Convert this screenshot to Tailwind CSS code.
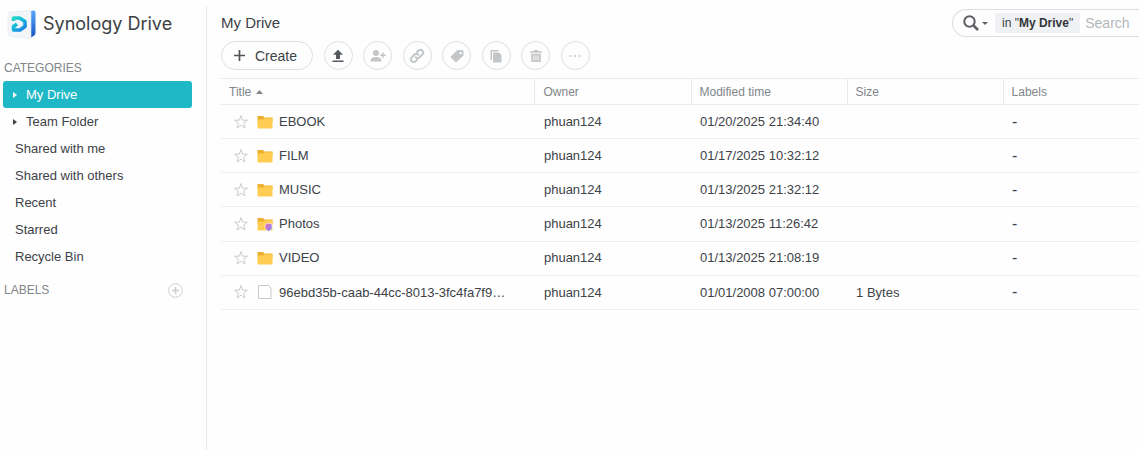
<!DOCTYPE html>
<html lang="en">
<head>
<meta charset="utf-8">
<meta name="viewport" content="width=device-width, initial-scale=1">
<title>Synology Drive</title>
<script src="https://cdn.jsdelivr.net/npm/@tailwindcss/browser@4"></script>
</head>
<body class="bg-[#fefefe] font-['Liberation_Sans',Arial,sans-serif] text-[13px] text-[#3c4248]">
<svg class="absolute size-0" aria-hidden="true">
  <defs>
    <linearGradient id="badge" x1="0" y1="0" x2="1" y2="1"><stop offset="0" stop-color="#f47c8c"/><stop offset="0.5" stop-color="#b878dc"/><stop offset="1" stop-color="#7884e8"/></linearGradient>
    <symbol id="star" viewBox="0 0 16 16"><path d="M8 1.600l1.600 4.600h4.900l-3.900 3 1.400 4.800L8 11.200 4 14l1.400-4.800-3.900-3h4.900z" fill="none" stroke="#c9cccf" stroke-linejoin="round"/></symbol>
    <symbol id="folder" viewBox="0 0 16 16"><path d="M.5 2h5.500l1.500 1.500h8V8H.5z" fill="#eeb02f"/><path d="M.5 5.500h6L8 4.300h7.500V14.500H.5z" fill="#ffcd52"/></symbol>
  </defs>
</svg>
<div class="flex min-h-screen pt-1.5">
  <aside class="w-[207px] shrink-0 border-r border-[#e8eaec]">
    <div class="flex h-9 items-center gap-1.5 pl-[7px]">
      <svg class="h-[32px] w-[30px] shrink-0" viewBox="0 0 30 32" aria-hidden="true">
        <defs>
          <linearGradient id="side" x1="0" y1="0" x2="0" y2="1"><stop offset="0" stop-color="#58a7fa"/><stop offset="1" stop-color="#1552c4"/></linearGradient>
          <linearGradient id="dee" gradientUnits="userSpaceOnUse" x1="5" y1="8" x2="18" y2="24"><stop offset="0" stop-color="#2be0c0"/><stop offset="0.5" stop-color="#16b7dc"/><stop offset="1" stop-color="#1670e8"/></linearGradient>
        </defs>
        <path d="M23 3.500L26 2.500Q28.500 2 28.500 4.500V25Q28.500 27 26.500 28L23 30z" fill="url(#side)"/>
        <path d="M2.500 4L22 2.500Q24 2.400 24 4.500V28.500Q24 31 22 30.500L2.500 28Q1 27.800 1 26V5.500Q1 4.200 2.500 4z" fill="#f3f5f9" stroke="#e3e7ee" stroke-width=".6"/>
        <path d="M6.500 13V10H12.500L18 13.500V18.500L13 22H6.500V18.500L10 16" fill="none" stroke="url(#dee)" stroke-width="3.600" stroke-linejoin="round"/>
      </svg>
      <h1 class="font-[Inter,sans-serif] text-lg leading-8 whitespace-nowrap text-[#3c4043]">Synology Drive</h1>
    </div>
    <h2 class="mt-4 pl-1 text-xs leading-5 text-[#81868b]">CATEGORIES</h2>
    <nav class="mt-[3px] flex flex-col pr-3.5 pl-[3px] leading-[27px]" aria-label="Categories">
      <a href="#" aria-current="page" class="flex items-center gap-2 rounded-[3px] bg-[#1fb8c6] pl-2.5 text-white"><svg class="h-1.5 w-[5px]" viewBox="0 0 5 6" aria-hidden="true"><path d="M0 0l4 3-4 3z" fill="currentColor"/></svg>My Drive</a>
      <a href="#" class="flex items-center gap-2 pl-2.5"><svg class="h-1.5 w-[5px]" viewBox="0 0 5 6" aria-hidden="true"><path d="M0 0l4 3-4 3z" fill="currentColor"/></svg>Team Folder</a>
      <a href="#" class="pl-3">Shared with me</a>
      <a href="#" class="pl-3">Shared with others</a>
      <a href="#" class="pl-3">Recent</a>
      <a href="#" class="pl-3">Starred</a>
      <a href="#" class="pl-3">Recycle Bin</a>
    </nav>
    <div class="mt-2.5 flex items-center justify-between pr-[23px] pl-1">
      <h2 class="text-xs leading-5 text-[#81868b]">LABELS</h2>
      <button type="button" aria-label="Add label"><svg class="size-[15px]" viewBox="0 0 15 15" fill="none" stroke="#cbced1" aria-hidden="true"><circle cx="7.500" cy="7.500" r="6.800"/><path d="M7.500 4v7M4 7.500h7" stroke-width="1.600"/></svg></button>
    </div>
  </aside>

  <main class="min-w-0 flex-1 pl-3.5">
    <header class="flex items-start justify-between">
      <h2 class="pt-[7px] text-[15px] leading-5">My Drive</h2>
      <div class="mt-[3px] flex h-7 w-[187px] items-center rounded-l-full border border-r-0 border-[#dcdfe2] pl-2.5">
        <button type="button" aria-label="Search options" class="flex items-center gap-[3px]">
          <svg class="size-4" viewBox="0 0 16 16" fill="none" stroke="#5c6064" aria-hidden="true"><circle cx="6.500" cy="6.500" r="5.200" stroke-width="2"/><path d="M10.500 10.500l4.500 4.500" stroke-width="2.500"/></svg>
          <svg class="h-[3px] w-1.5" viewBox="0 0 6 3" aria-hidden="true"><path d="M0 0h6L3 3z" fill="#5c6064"/></svg>
        </button>
        <span class="ml-[7px] rounded-xs bg-[#eff1f4] px-[7px] text-xs leading-5 whitespace-nowrap">in "<b class="text-[#32363a]">My Drive</b>"</span>
        <input type="text" aria-label="Search" placeholder="Search" class="ml-[5px] min-w-0 flex-1 text-sm outline-none placeholder:text-[#b4b8bb]">
      </div>
    </header>

    <div class="mt-1 flex max-w-[369px] items-center justify-between text-[#c3c6c8]" role="toolbar" aria-label="File actions">
      <button type="button" class="flex h-[29px] w-[92px] items-center gap-2.5 rounded-full border border-[#dcdfe2] pl-3 text-sm text-[#3c4248]"><svg class="size-[11px]" viewBox="0 0 11 11" aria-hidden="true"><path d="M5.500 0v11M0 5.500h11" stroke="#505458" stroke-width="1.700"/></svg>Create</button>
      <button type="button" aria-label="Upload" class="flex size-[29px] items-center justify-center rounded-full border border-[#dcdfe2] text-[#55595d]"><svg class="size-3.5" viewBox="0 0 14 14" fill="currentColor" aria-hidden="true"><path d="M7 .7l5 5H9V10H5V5.700H2zM1.500 11.500h11V13h-11z"/></svg></button>
      <button type="button" disabled aria-label="Share" class="flex size-[29px] items-center justify-center rounded-full border border-[#dcdfe2]"><svg class="h-3.5 w-4" viewBox="0 0 16 14" fill="currentColor" aria-hidden="true"><circle cx="6" cy="4" r="3"/><path d="M.5 12.500V11Q1.500 8 6 8t5.500 3v1.500zM12.300 3.500h1.400v2h2v1.400h-2v2h-1.400v-2h-2V5.500h2z"/></svg></button>
      <button type="button" disabled aria-label="Copy link" class="flex size-[29px] items-center justify-center rounded-full border border-[#dcdfe2]"><svg class="size-4" viewBox="0 0 16 16" fill="none" stroke="currentColor" stroke-width="2" stroke-linecap="round" aria-hidden="true"><path d="M6.700 9.300a2.700 2.700 0 0 0 3.900 0l2.700-2.700a2.700 2.700 0 0 0-3.900-3.900L8 4.100M9.300 6.700a2.700 2.700 0 0 0-3.900 0L2.700 9.400a2.700 2.700 0 0 0 3.900 3.900L8 11.900"/></svg></button>
      <button type="button" disabled aria-label="Label" class="flex size-[29px] items-center justify-center rounded-full border border-[#dcdfe2]"><svg class="size-3.5" viewBox="0 0 14 14" fill="currentColor" fill-rule="evenodd" aria-hidden="true"><path d="M7.500 1h4.500Q13.500 1 13.500 2.500v4L6.800 12.800Q6 13.500 5.200 12.800L1 8.800Q.3 8 1 7.300zM10.500 2.800a1.200 1.200 0 1 0 .01 2.400A1.200 1.200 0 0 0 10.500 2.800z"/></svg></button>
      <button type="button" disabled aria-label="Copy" class="flex size-[29px] items-center justify-center rounded-full border border-[#dcdfe2]"><svg class="size-3.5" viewBox="0 0 14 14" fill="currentColor" aria-hidden="true"><path d="M1.500 1h8v1.500H3V11H1.500zM4 3.500h6L12.500 6v7.500H4z"/></svg></button>
      <button type="button" disabled aria-label="Delete" class="flex size-[29px] items-center justify-center rounded-full border border-[#dcdfe2]"><svg class="size-3.5" viewBox="0 0 14 14" fill="currentColor" fill-rule="evenodd" aria-hidden="true"><path d="M5 1h4v1.200h4v1.500H1V2.200h4zM2.200 4.700h9.600V13H2.200zM4.300 6.200v5.300h.9V6.200zM6.500 6.200v5.300h.9V6.200zM8.700 6.200v5.300h.9V6.200z"/></svg></button>
      <button type="button" disabled aria-label="More" class="flex size-[29px] items-center justify-center rounded-full border border-[#dcdfe2]"><svg class="h-1 w-3" viewBox="0 0 12 4" fill="currentColor" aria-hidden="true"><circle cx="1.500" cy="2" r="1"/><circle cx="6" cy="2" r="1"/><circle cx="10.500" cy="2" r="1"/></svg></button>
    </div>

    <table class="mt-2 h-[232px] w-full table-fixed border-collapse text-left whitespace-nowrap">
      <colgroup><col class="w-[34.2%]"><col class="w-[17%]"><col class="w-[17%]"><col class="w-[17%]"><col></colgroup>
      <thead class="text-xs text-[#81868b]">
        <tr class="h-[26px] border-y border-[#e8eaec]">
          <th scope="col" class="pl-2 font-normal" aria-sort="ascending"><button type="button" class="flex items-center gap-[5px]">Title<svg class="h-1 w-[7px]" viewBox="0 0 7 4" aria-hidden="true"><path d="M0 4l3.500-4L7 4z" fill="#81868b"/></svg></button></th>
          <th scope="col" class="border-l border-[#e8eaec] pl-2 font-normal">Owner</th>
          <th scope="col" class="border-l border-[#e8eaec] pl-2 font-normal">Modified time</th>
          <th scope="col" class="border-l border-[#e8eaec] pl-2 font-normal">Size</th>
          <th scope="col" class="border-l border-[#e8eaec] pl-2 font-normal">Labels</th>
        </tr>
      </thead>
      <tbody>
        <tr class="border-b border-[#edeff0]">
          <td class="pl-3"><div class="flex items-center"><button type="button" aria-label="Star EBOOK"><svg class="size-4"><use href="#star"/></svg></button><svg class="mr-1.5 ml-2 size-4"><use href="#folder"/></svg>EBOOK</div></td>
          <td class="pl-[9px]">phuan124</td><td class="pl-[9px]">01/20/2025 21:34:40</td><td class="pl-[9px]"></td><td class="pl-[9px] text-base">-</td>
        </tr>
        <tr class="border-b border-[#edeff0]">
          <td class="pl-3"><div class="flex items-center"><button type="button" aria-label="Star FILM"><svg class="size-4"><use href="#star"/></svg></button><svg class="mr-1.5 ml-2 size-4"><use href="#folder"/></svg>FILM</div></td>
          <td class="pl-[9px]">phuan124</td><td class="pl-[9px]">01/17/2025 10:32:12</td><td class="pl-[9px]"></td><td class="pl-[9px] text-base">-</td>
        </tr>
        <tr class="border-b border-[#edeff0]">
          <td class="pl-3"><div class="flex items-center"><button type="button" aria-label="Star MUSIC"><svg class="size-4"><use href="#star"/></svg></button><svg class="mr-1.5 ml-2 size-4"><use href="#folder"/></svg>MUSIC</div></td>
          <td class="pl-[9px]">phuan124</td><td class="pl-[9px]">01/13/2025 21:32:12</td><td class="pl-[9px]"></td><td class="pl-[9px] text-base">-</td>
        </tr>
        <tr class="border-b border-[#edeff0]">
          <td class="pl-3"><div class="flex items-center"><button type="button" aria-label="Star Photos"><svg class="size-4"><use href="#star"/></svg></button><svg class="mr-1.5 ml-2 size-4" viewBox="0 0 16 16"><use href="#folder"/><path d="M8 8.500l3-1.500 4 1v5l-3.500 2.500L8 12.500z" fill="url(#badge)" stroke="#fff" stroke-width=".6"/></svg>Photos</div></td>
          <td class="pl-[9px]">phuan124</td><td class="pl-[9px]">01/13/2025 11:26:42</td><td class="pl-[9px]"></td><td class="pl-[9px] text-base">-</td>
        </tr>
        <tr class="border-b border-[#edeff0]">
          <td class="pl-3"><div class="flex items-center"><button type="button" aria-label="Star VIDEO"><svg class="size-4"><use href="#star"/></svg></button><svg class="mr-1.5 ml-2 size-4"><use href="#folder"/></svg>VIDEO</div></td>
          <td class="pl-[9px]">phuan124</td><td class="pl-[9px]">01/13/2025 21:08:19</td><td class="pl-[9px]"></td><td class="pl-[9px] text-base">-</td>
        </tr>
        <tr class="border-b border-[#edeff0]">
          <td class="pl-3"><div class="flex items-center"><button type="button" aria-label="Star file"><svg class="size-4"><use href="#star"/></svg></button><svg class="mr-1.5 ml-2 size-4" viewBox="0 0 16 16" aria-hidden="true"><path d="M2 1.500h9.500l2.500 2.500v10.500H2q-.5 0-.5-.5V2q0-.5.500-.5z" fill="#fff" stroke="#c5c8ca"/></svg>96ebd35b-caab-44cc-8013-3fc4fa7f9…</div></td>
          <td class="pl-[9px]">phuan124</td><td class="pl-[9px]">01/01/2008 07:00:00</td><td class="pl-[9px]">1 Bytes</td><td class="pl-[9px] text-base">-</td>
        </tr>
      </tbody>
    </table>
  </main>
</div>
</body>
</html>
